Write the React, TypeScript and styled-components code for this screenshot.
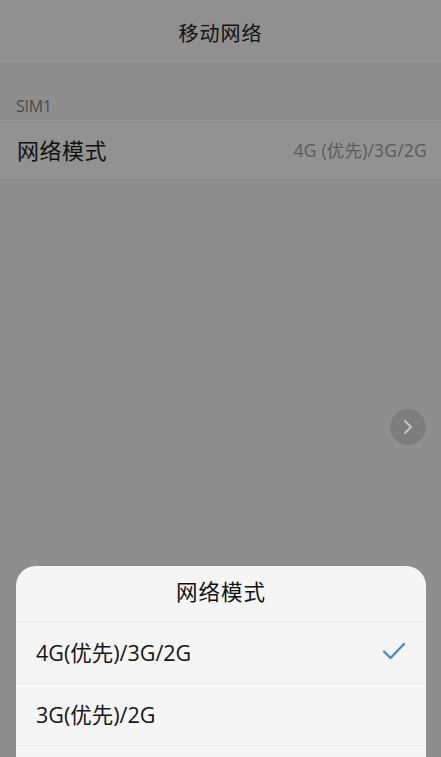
import styled, { createGlobalStyle } from "styled-components";

const GlobalStyle = createGlobalStyle`
  html, body {
    margin: 0;
    padding: 0;
    background: #8e8e8e;
  }
  body {
    font-family: "Open Sans", "Noto Sans CJK SC", sans-serif;
  }
`;

const modes = [
  { label: "4G(优先)/3G/2G", checked: true },
  { label: "3G(优先)/2G", checked: false },
];

const Check = () => (
  <svg width="24" height="18" viewBox="0 0 24 18" fill="none">
    <path d="M2 9.5 L8.5 16 L22 2" stroke="#3d8fcf" strokeWidth="2.4" strokeLinecap="round" strokeLinejoin="round" />
  </svg>
);

export default function App() {
  return (
    <>
      <GlobalStyle />
      <Screen>
        <Header>移动网络</Header>
        <SectionLabel>SIM1</SectionLabel>
        <Row>
          <RowLabel>网络模式</RowLabel>
          <RowValue>4G (优先)/3G/2G</RowValue>
        </Row>

        <FloatButton>
          <svg width="14" height="16" viewBox="0 0 14 16" fill="none">
            <path d="M4 2 L10 8 L4 14" stroke="#c4c4c4" strokeWidth="2" strokeLinecap="round" strokeLinejoin="round" />
          </svg>
        </FloatButton>

        <Sheet>
          <SheetTitle>网络模式</SheetTitle>
          {modes.map((m) => (
            <Option key={m.label}>
              <OptionLabel>{m.label}</OptionLabel>
              {m.checked && <Check />}
            </Option>
          ))}
        </Sheet>
      </Screen>
    </>
  );
}

const Screen = styled.div`
  position: relative;
  width: 441px;
  height: 757px;
  overflow: hidden;
  background: #8e8e8e;
`;

const Header = styled.div`
  height: 62px;
  box-sizing: border-box;
  padding-top: 3px;
  display: flex;
  align-items: center;
  justify-content: center;
  font-family: "Noto Sans CJK SC", sans-serif;
  font-size: 20px;
  color: #111;
  letter-spacing: 1px;
  border-bottom: 1px solid #9a9a9a;
  background: #909090;
`;

const SectionLabel = styled.div`
  height: 59px;
  box-sizing: border-box;
  padding: 0 16px 6px;
  display: flex;
  align-items: flex-end;
  font-size: 16px;
  line-height: 16px;
  letter-spacing: -0.3px;
  color: #4a4a4a;
  border-bottom: 1px solid #979797;
`;

const Row = styled.div`
  height: 57px;
  box-sizing: border-box;
  padding: 0 14px 0 17px;
  display: flex;
  align-items: center;
  justify-content: space-between;
  background: #929292;
  border-bottom: 1px solid #979797;
`;

const RowLabel = styled.span`
  font-family: "Noto Sans CJK SC", sans-serif;
  font-size: 22px;
  color: #111;
  letter-spacing: 0.5px;
`;

const RowValue = styled.span`
  font-size: 17.5px;
  letter-spacing: 0.2px;
  color: #5a5a5a;
`;

const FloatButton = styled.div`
  position: absolute;
  left: 390px;
  top: 409px;
  width: 36px;
  height: 36px;
  border-radius: 50%;
  background: #7d7d7d;
  display: flex;
  align-items: center;
  justify-content: center;
`;

const Sheet = styled.div`
  position: absolute;
  left: 16px;
  right: 15px;
  top: 566px;
  height: 220px;
  background: #f5f5f5;
  border-radius: 20px 20px 0 0;
`;

const SheetTitle = styled.div`
  height: 56px;
  box-sizing: border-box;
  padding-bottom: 7px;
  display: flex;
  align-items: center;
  justify-content: center;
  font-family: "Noto Sans CJK SC", sans-serif;
  font-size: 21.5px;
  color: #111;
  letter-spacing: 1px;
  border-bottom: 1px solid #e9e9e9;
`;

const Option = styled.div`
  height: 62px;
  box-sizing: border-box;
  padding: 0 20px 3px 20px;
  display: flex;
  align-items: center;
  justify-content: space-between;
  border-bottom: 1px solid #e9e9e9;
`;

const OptionLabel = styled.span`
  font-size: 21.5px;
  color: #161616;
`;
